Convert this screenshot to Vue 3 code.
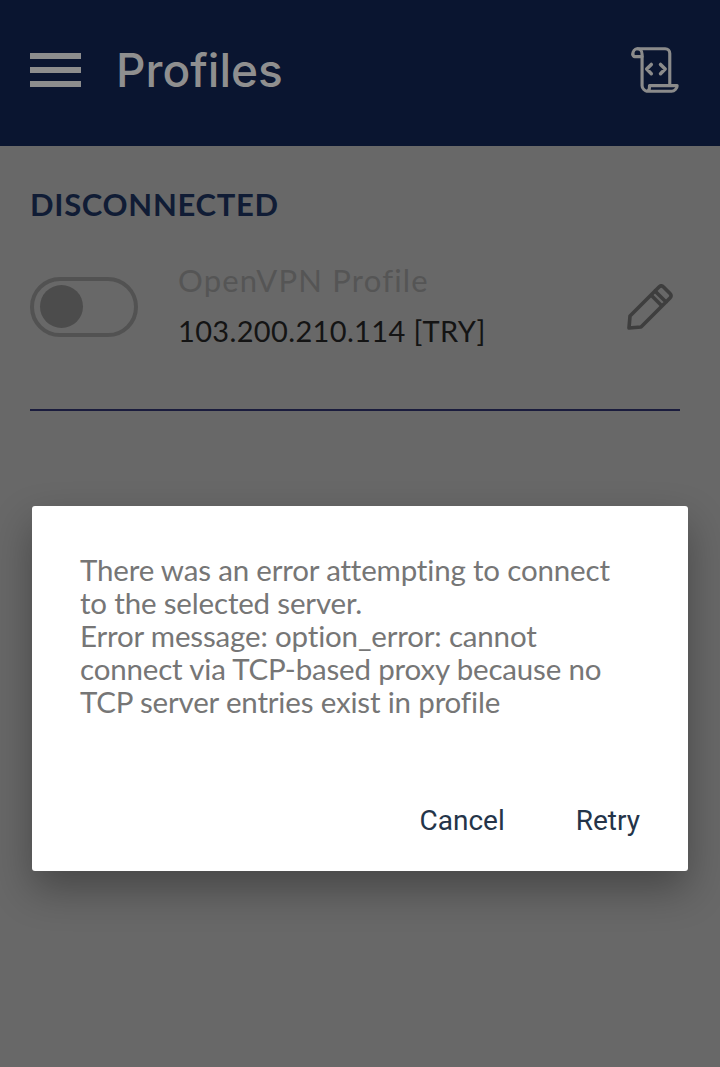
<script setup>
const message = [
  'There was an error attempting to connect',
  'to the selected server.',
  'Error message: option_error: cannot',
  'connect via TCP-based proxy because no',
  'TCP server entries exist in profile',
];
</script>

<template>
  <div class="page">
    <header class="topbar">
      <div class="burger"><span></span><span></span><span></span></div>
      <h1 class="title">Profiles</h1>
      <svg class="scroll-icon" viewBox="0 0 52 52" fill="none" stroke="#8b8b8b" stroke-width="3.4" stroke-linejoin="round" stroke-linecap="round">
        <path d="M2 9c0-3 2-6 5-6h30c3 0 5 2 5 5v33" />
        <path d="M2 9c0 1.500 1 2.500 2 2.500h8" />
        <path d="M7 3c3 0 5 2.500 5 6v34c0 3 3 6 6 6h26c3 0 6-3 6-6H20v2c0 2-1 4-3 4" />
        <path d="M22 20l-5 5 5 5M32 20l5 5-5 5" stroke-width="3.800" />
      </svg>
    </header>

    <main class="content">
      <div class="status">DISCONNECTED</div>
      <div class="profile">
        <div class="toggle"><div class="knob"></div></div>
        <div class="profile-text">
          <div class="profile-name">OpenVPN Profile</div>
          <div class="profile-host">103.200.210.114 [TRY]</div>
        </div>
        <svg class="edit-icon" viewBox="0 0 46 46" fill="none" stroke="#3e3e3e" stroke-width="3.600" stroke-linejoin="round">
          <path d="M2 44l1-12L28 7l11 11-25 25z" />
          <path d="M28 7l4-4c1.500-1.500 3-1.500 4.500 0l6.500 6.500c1.500 1.500 1.500 3 0 4.500l-4 4" />
          <path d="M24 11l11 11" />
        </svg>
      </div>
    </main>

    <div class="scrim">
      <div class="dialog">
        <p class="dialog-text">
          <span v-for="line in message" :key="line" class="line">{{ line }}</span>
        </p>
        <div class="dialog-actions">
          <button class="action">Cancel</button>
          <button class="action">Retry</button>
        </div>
      </div>
    </div>
  </div>
</template>

<style>
html, body {
  margin: 0;
  background: #686868;
}
</style>

<style scoped>
.page {
  position: relative;
  width: 720px;
  height: 1067px;
  background: #686868;
  overflow: hidden;
  font-family: Lato, "Open Sans", sans-serif;
}

.topbar {
  display: flex;
  align-items: center;
  height: 146px;
  padding: 0 40px 6px 30px;
  box-sizing: border-box;
  background: #0a1530;
}

.burger {
  display: flex;
  flex-direction: column;
  gap: 8px;
  width: 51px;
}

.burger span {
  height: 6px;
  background: #8d8d8d;
}

.title {
  margin: 0 0 0 35px;
  font-family: Inter, Lato, sans-serif;
  font-size: 46px;
  font-weight: 500;
  color: #8f8f8f;
  line-height: 1;
  flex: 1;
}

.scroll-icon {
  width: 52px;
  height: 48px;
  margin-right: -1px;
}

.content {
  padding: 40px 40px 0 30px;
}

.status {
  font-size: 31px;
  font-weight: 700;
  line-height: 36px;
  color: #101c35;
  letter-spacing: 0.7px;
}

.profile {
  display: flex;
  align-items: center;
  height: 189px;
  padding-bottom: 18px;
  box-sizing: border-box;
  border-bottom: 2px solid #1a1c3d;
}

.toggle {
  display: flex;
  align-items: center;
  width: 108px;
  height: 60px;
  padding-left: 6px;
  box-sizing: border-box;
  border: 4px solid #525252;
  border-radius: 30px;
}

.knob {
  width: 43px;
  height: 43px;
  border-radius: 50%;
  background: #4c4c4c;
}

.profile-text {
  flex: 1;
  margin-left: 40px;
}

.profile-name {
  font-size: 31px;
  line-height: 46px;
  color: #555;
  letter-spacing: 1.2px;
}

.profile-host {
  margin-top: 3px;
  font-size: 29px;
  line-height: 50px;
  color: #141414;
  letter-spacing: 0.35px;
}

.edit-icon {
  width: 46px;
  height: 46px;
  margin-right: 7px;
}

.scrim {
  position: absolute;
  inset: 0;
  display: flex;
  justify-content: center;
  align-items: flex-start;
  padding-top: 506px;
  box-sizing: border-box;
}

.dialog {
  width: 656px;
  height: 365px;
  padding: 47px 48px 0;
  box-sizing: border-box;
  background: #fff;
  border-radius: 3px;
  box-shadow: 0 18px 40px rgba(0, 0, 0, 0.32);
}

.dialog-text {
  margin: 0;
  height: 250px;
  font-size: 29.500px;
  line-height: 33px;
  color: #767676;
  letter-spacing: -0.17px;
}

.line {
  display: block;
  white-space: nowrap;
}

.dialog-actions {
  display: flex;
  justify-content: flex-end;
  gap: 71px;
}

.action {
  padding: 0;
  border: 0;
  background: none;
  font-family: Roboto, sans-serif;
  font-size: 28px;
  line-height: 36px;
  color: #243449;
}
</style>
